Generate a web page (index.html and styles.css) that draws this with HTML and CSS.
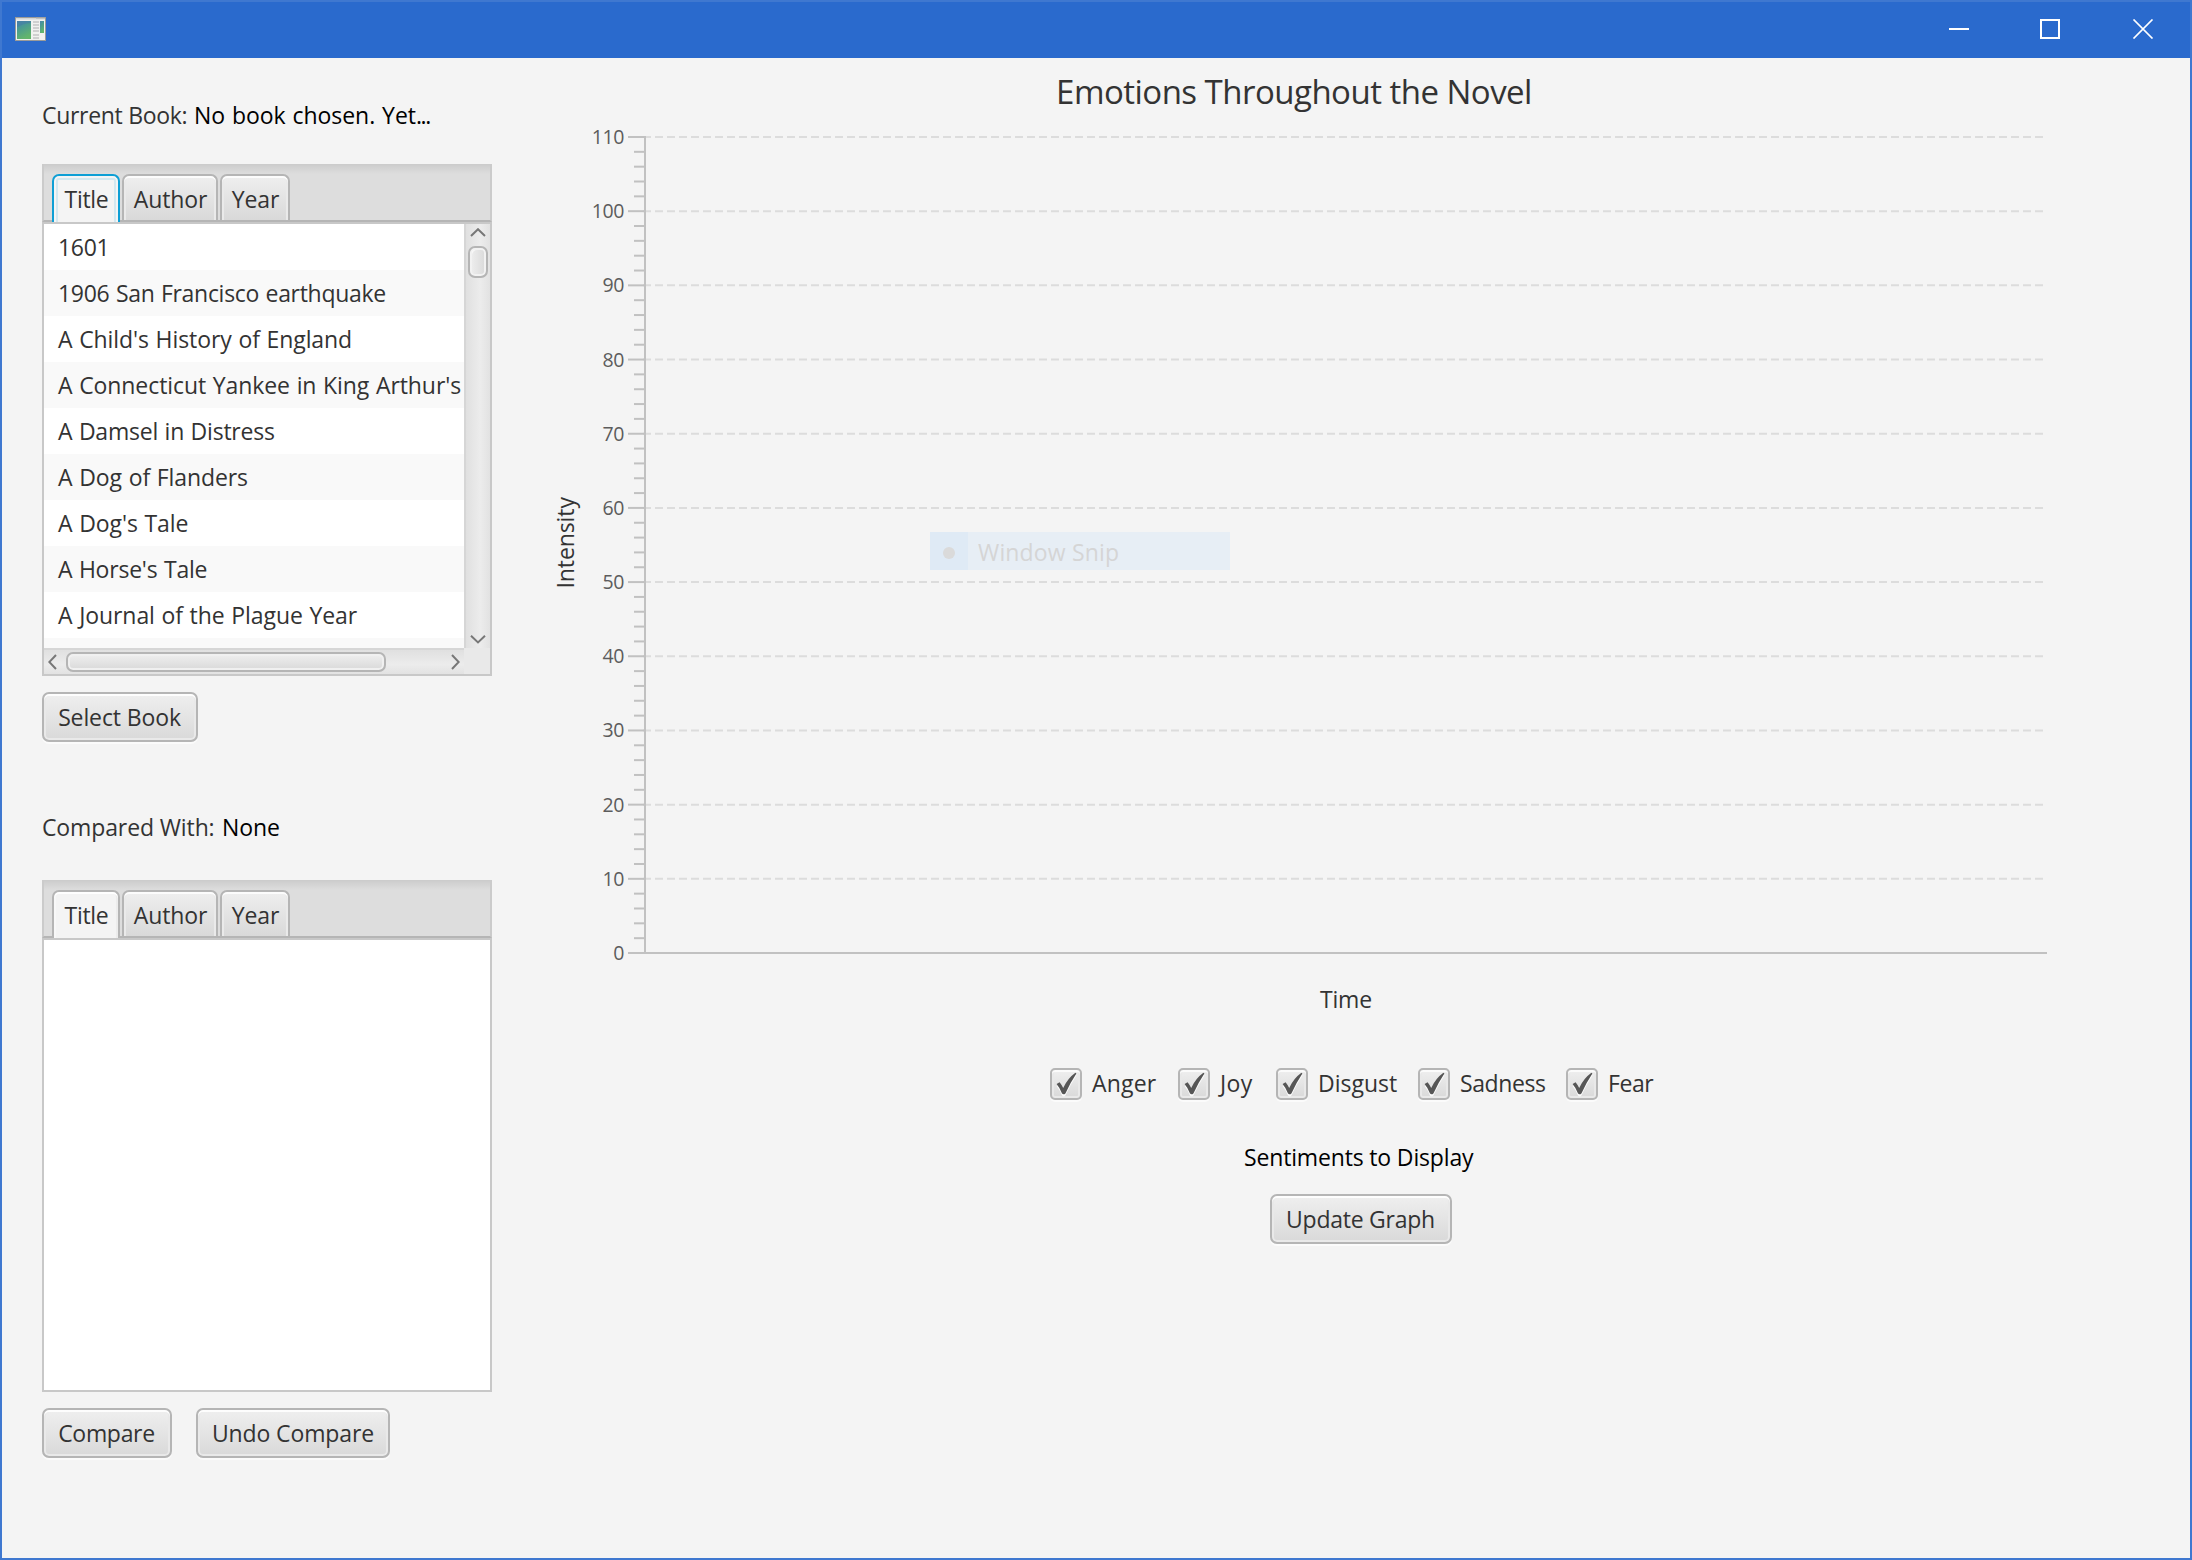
FILE: index.html
```
<!DOCTYPE html>
<html lang="en">
<head>
<meta charset="utf-8">
<title>Novel Emotions</title>
<link rel="stylesheet" href="styles.css">
</head>
<body>
<svg class="defs" width="0" height="0" aria-hidden="true">
  <symbol id="check" viewBox="0 0 32 32">
    <path d="M6.6 18 9.6 16.2Q11.5 18.5 13.2 22 17.5 12.5 25.4 6.8L26.4 7.4Q20 17 15.4 27.4 13.6 29.4 12 27.6 10 22 6.6 18Z" fill="#fbfbfb"/>
    <path d="M6.6 16 9.6 14.2Q11.5 16.5 13.2 20 17.5 10.5 25.4 4.8L26.4 5.4Q20 15 15.4 25.4 13.6 27.2 12 25.6 10 20 6.6 16Z" fill="#565656"/>
  </symbol>
</svg>
<div class="window">
  <header class="titlebar">
    <svg class="app-icon" width="32" height="26" viewBox="0 0 32 26">
      <defs>
        <linearGradient id="pic" x1="0" y1="0" x2="0.4" y2="1">
          <stop offset="0" stop-color="#4a86ad"/><stop offset="0.4" stop-color="#4a9a92"/><stop offset="1" stop-color="#62b56c"/>
        </linearGradient>
      </defs>
      <rect x="0.5" y="2.5" width="30" height="23" fill="#f1f1ef" stroke="#9b9b98"/>
      <rect x="1" y="3" width="29" height="1.5" fill="#d4d6d6"/>
      <rect x="21" y="2.5" width="9" height="1" fill="#a9abab"/>
      <rect x="2" y="6" width="14" height="18" fill="url(#pic)"/>
      <path d="M3 12Q9 8 16 8V6H2V12Z" fill="#4478a8" opacity=".5"/>
      <path d="M18 7h6M18 10h6M18 13h6M18 16h6M18 20h6M18 23h6" stroke="#d0d0d0" stroke-width="2"/>
      <rect x="25" y="6" width="4" height="12" fill="url(#pic)"/>
    </svg>
    <svg class="caption" width="206" height="20" viewBox="0 0 206 20">
      <path d="M0 10H20" stroke="#fff" stroke-width="2"/>
      <rect x="92" y="1" width="18" height="18" fill="none" stroke="#fff" stroke-width="2"/>
      <path d="M184.5 .5 203.5 19.5M203.5 .5 184.5 19.5" stroke="#fff" stroke-width="1.7"/>
    </svg>
  </header>
  <div class="content">
    <aside class="sidebar">
      <div class="status current"><span class="caption-label">Current Book:</span><span class="value">No book chosen. Yet<span class="dots">...</span></span></div>
      <section class="tabpane">
        <nav class="tabs"><div class="tab t1 selected focused">Title</div><div class="tab t2">Author</div><div class="tab t3">Year</div></nav>
        <div class="pane list-grid">
          <ul class="list">
            <li class="tight">1601</li>
            <li class="tight">1906 San Francisco earthquake</li>
            <li>A Child's History of England</li>
            <li>A Connecticut Yankee in King Arthur's</li>
            <li class="snug">A Damsel in Distress</li>
            <li>A Dog of Flanders</li>
            <li>A Dog's Tale</li>
            <li class="snug">A Horse's Tale</li>
            <li>A Journal of the Plague Year</li>
            <li></li>
          </ul>
          <div class="vbar">
            <svg width="16" height="9" viewBox="0 0 16 9"><path d="M1 8 8 1.2 15 8" fill="none" stroke="#777" stroke-width="2"/></svg>
            <div class="thumb"></div>
            <svg width="16" height="9" viewBox="0 0 16 9"><path d="M1 .8 8 7.4 15 .8" fill="none" stroke="#777" stroke-width="2"/></svg>
          </div>
          <div class="hbar">
            <svg width="9" height="16" viewBox="0 0 9 16"><path d="M8 1 1.3 8 8 15" fill="none" stroke="#777" stroke-width="2"/></svg>
            <div class="thumb"></div>
            <svg width="9" height="16" viewBox="0 0 9 16"><path d="M1 1 7.7 8 1 15" fill="none" stroke="#777" stroke-width="2"/></svg>
          </div>
          <div class="corner"></div>
        </div>
      </section>
      <div class="actions"><button class="btn select">Select Book</button></div>
      <div class="status compared"><span class="caption-label">Compared With:</span><span class="value">None</span></div>
      <section class="tabpane">
        <nav class="tabs"><div class="tab t1 selected">Title</div><div class="tab t2">Author</div><div class="tab t3">Year</div></nav>
        <div class="pane"></div>
      </section>
      <div class="actions"><button class="btn compare">Compare</button><button class="btn undo">Undo Compare</button></div>
    </aside>
    <main class="main">
      <h1 class="chart-title">Emotions Throughout the Novel</h1>
      <svg class="chart" id="chart" width="1508" height="855" viewBox="540 124 1508 855">
        <g id="grid" class="grid"></g>
        <g id="ticks" class="axis"></g>
        <path class="axis" d="M645 136V954M628 953H2047"/>
        <g id="labels" class="tick-labels"></g>
        <text class="axis-label" transform="translate(573.5 588.5) rotate(-90)">Intensity</text>
      </svg>
      <div class="x-label">Time</div>
      <div class="checks">
        <label class="c1"><span class="box"><svg><use href="#check"/></svg></span>Anger</label>
        <label class="c2"><span class="box"><svg><use href="#check"/></svg></span>Joy</label>
        <label class="c3"><span class="box"><svg><use href="#check"/></svg></span>Disgust</label>
        <label class="c4"><span class="box"><svg><use href="#check"/></svg></span>Sadness</label>
        <label class="c5"><span class="box"><svg><use href="#check"/></svg></span>Fear</label>
      </div>
      <div class="sentiments">Sentiments to Display</div>
      <button class="btn update">Update Graph</button>
    </main>
  </div>
  <div class="snip"><span class="snip-icon"><i></i></span><span class="snip-text">Window Snip</span></div>
</div>
<script src="chart.js"></script>
</body>
</html>
```
FILE: chart.js
```
// Y axis: 0 to 110, a labelled tick every 10 and a minor tick every 2.
const bottom = 953, unit = 816 / 110;
let ticks = '', grid = '', labels = '';
for (let v = 0; v <= 110; v += 2) {
  const y = +(bottom - v * unit).toFixed(2);
  const major = v % 10 === 0;
  ticks += `<path d="M${major ? 628 : 634} ${y}H645"/>`;
  if (major) {
    if (v) grid += `<path d="M643 ${y}H2043"/>`;
    labels += `<text x="624" y="${Math.round(y + 7)}">${v}</text>`;
  }
}
document.getElementById('ticks').innerHTML = ticks;
document.getElementById('grid').innerHTML = grid;
document.getElementById('labels').innerHTML = labels;
```
FILE: styles.css
```
* { box-sizing: border-box; }
body {
  margin: 0;
  font-family: "Open Sans", "Noto Sans", sans-serif;
  font-size: 23px;
  letter-spacing: -0.12px;
  color: #333;
}
.defs { position: absolute; }
.window {
  position: relative;
  width: 2192px;
  height: 1560px;
  border: 2px solid #3f78d0;
  background: #f4f4f4;
  overflow: hidden;
}
.titlebar {
  display: flex;
  justify-content: space-between;
  align-items: flex-start;
  height: 56px;
  padding: 14px 35px 0 13px;
  background: #2a6acd;
}
.titlebar .app-icon { margin-top: -1px; }
.titlebar .caption { margin-top: 3px; }
.content { display: flex; }

/* left column */
.sidebar { width: 490px; padding-left: 40px; }
.status { display: flex; height: 40px; line-height: 40px; white-space: nowrap; }
.value { padding-left: 1px; color: #000; letter-spacing: -0.05px; word-spacing: 1px; }
.dots { letter-spacing: -1.4px; }
.current { margin: 37px 0 29px; }
.current .caption-label { width: 151px; letter-spacing: -0.3px; }
.compared { margin: 65px 0 33px; }
.compared .caption-label { width: 179px; }

.tabpane { width: 450px; height: 512px; display: flex; flex-direction: column; }
.tabs {
  display: flex;
  height: 58px;
  padding: 10px 0 0 8px;
  border: 2px solid #cbcbcb;
  border-top: 0;
  border-bottom-color: #b5b5b5;
  background: linear-gradient(#cbcbcb 0, #d1d1d1 3px, #ddd 10px);
}
.tab {
  height: 46px;
  padding: 1px 0 0 1px;
  line-height: 45px;
  border: 2px solid #b5b5b5;
  border-bottom: 0;
  border-radius: 7px 7px 0 0;
  background: linear-gradient(#efefef, #d9d9d9);
  box-shadow: inset 0 2px #fcfcfc, inset 2px 0 #eaeaea, inset -2px 0 #eaeaea;
  text-align: center;
  white-space: nowrap;
}
.tab.selected { position: relative; height: 48px; background: #f4f4f4; box-shadow: inset 0 2px #fff, inset 2px 0 #f8f8f8, inset -2px 0 #ececec; }
.tab.focused { border-color: #0e9fd5; box-shadow: inset 0 2px #f4f4f4, inset 2px 0 #f4f4f4, inset -2px 0 #f4f4f4, inset 0 4px #d3e8f0, inset 4px 0 #d3e8f0, inset -4px 0 #d3e8f0; }
.t1 { width: 68px; letter-spacing: -0.3px; }
.t2 { width: 96px; margin-left: 2px; }
.t3 { width: 70px; margin-left: 2px; }

.pane { flex: 1; min-height: 0; border: 2px solid #c8c8c8; background: #fff; }
.list-grid { display: grid; grid-template: 424px 26px / 420px 26px; height: 454px; flex: none; }
.list { margin: 0; padding: 0; list-style: none; overflow: hidden; }
.list li { height: 46px; padding-left: 14px; line-height: 46px; white-space: nowrap; letter-spacing: -0.08px; word-spacing: 0.8px; }
.list li:nth-child(even) { background: #f9f9f9; }
.list .tight { letter-spacing: -0.3px; }
.list .snug { letter-spacing: -0.22px; }
.thumb { border: 2px solid #b5b5b5; border-radius: 7px; }
.vbar {
  display: flex;
  flex-direction: column;
  align-items: center;
  padding: 4px 0 4px 0;
  border-left: 2px solid #d6d6d6;
  background: linear-gradient(90deg, #e0e0e0, #ececec 60%, #e2e2e2);
}
.vbar .thumb { width: 20px; height: 32px; margin: 9px 0 auto; background: linear-gradient(90deg, #efefef, #d9d9d9); box-shadow: inset 0 0 0 2px #f2f2f2, inset 2px 2px #fafafa; }
.hbar {
  display: flex;
  align-items: center;
  padding: 0 4px 0 4px;
  border-top: 2px solid #d6d6d6;
  background: linear-gradient(#e0e0e0, #ececec 60%, #e2e2e2);
}
.hbar .thumb { width: 320px; height: 20px; margin: 0 auto 0 9px; background: linear-gradient(#efefef, #d9d9d9); box-shadow: inset 0 0 0 2px #f0f0f0, inset 0 2px #fcfcfc; }
.corner { background: #e9e9e9; }

.actions { display: flex; gap: 24px; margin-top: 16px; }
.btn {
  height: 50px;
  padding: 0;
  border: 2px solid #b5b5b5;
  border-radius: 7px;
  background: linear-gradient(#efefef, #d9d9d9);
  box-shadow: inset 0 2px #fdfdfd, inset 0 0 0 2px #e9e9e9, 0 2px #fbfbfb;
  color: #333;
  font: inherit;
  letter-spacing: -0.12px;
  white-space: nowrap;
}
.select { width: 156px; padding-right: 1px; }
.compare { width: 130px; padding-right: 1px; letter-spacing: -0.3px; }
.undo { width: 194px; }

/* chart and controls */
.main { display: flex; flex-direction: column; width: 1508px; margin-left: 48px; }
.chart-title {
  height: 50px;
  margin: 9px 0 7px;
  line-height: 50px;
  text-align: center;
  font-size: 33px;
  font-weight: 400;
  letter-spacing: -0.52px;
}
.chart { display: block; }
.axis { fill: none; stroke: #c1c1c1; stroke-width: 2; }
.grid { stroke: #dcdcdc; stroke-width: 2; stroke-dasharray: 8 4; }
.tick-labels { font-size: 19.5px; letter-spacing: -0.4px; fill: #5c5c5c; text-anchor: end; }
.axis-label { fill: #333; letter-spacing: -0.1px; }
.x-label { height: 40px; margin: 0 0 0 104px; line-height: 40px; text-align: center; }
.checks { display: flex; height: 40px; margin: 45px 0 0 510px; }
.checks label { display: flex; align-items: center; gap: 10px; padding-bottom: 2px; line-height: 38px; white-space: nowrap; }
.box {
  width: 32px;
  height: 32px;
  margin-top: 2px;
  border: 2px solid #b5b5b5;
  border-radius: 5px;
  background: linear-gradient(#efefef, #d9d9d9);
  box-shadow: inset 0 2px #fbfbfb, inset 0 0 0 2px #e9e9e9, 0 2px #fbfbfb;
}
.box svg { display: block; width: 32px; height: 32px; margin: -2px; }
.c1 { width: 128px; letter-spacing: 0.2px; }
.c2 { width: 98px; letter-spacing: 0.4px; }
.c3 { width: 142px; letter-spacing: 0; }
.c4 { width: 148px; letter-spacing: -0.4px; }
.c5 { letter-spacing: -0.4px; }
.sentiments { height: 40px; margin: 33px 0 0 704px; line-height: 40px; color: #000; white-space: nowrap; letter-spacing: -0.16px; }
.update { width: 182px; margin: 17px 0 0 730px; padding-right: 1px; letter-spacing: -0.25px; }

/* menu item fading out over the chart */
.snip {
  position: absolute;
  left: 928px;
  top: 530px;
  display: flex;
  width: 300px;
  height: 38px;
  background: #e7eef5;
  color: #d5d5d5;
  line-height: 39px;
}
.snip-icon { display: flex; align-items: center; justify-content: center; width: 38px; height: 38px; padding-top: 4px; background: #dfeaf5; }
.snip-icon i { width: 12px; height: 12px; border-radius: 50%; background: #dadada; }
.snip-text { padding-left: 10px; padding-top: 1px; letter-spacing: 0.15px; }
```
